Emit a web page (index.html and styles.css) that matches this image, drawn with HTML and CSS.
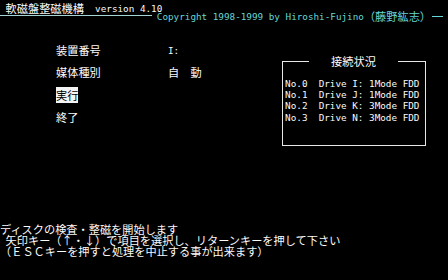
FILE: index.html
```html
<!DOCTYPE html>
<html lang="ja">
<head>
	<meta charset="UTF-8">
	<title>軟磁盤整磁機構</title>
	<link rel="stylesheet" href="styles.css">
</head>
<body>
	<div class="screen">
		<div class="title"><span class="ja">軟磁盤整磁機構</span><span class="en">  version 4.10</span></div>
		<div class="copy">
			<div class="rule"></div>
			<span class="en">Copyright 1998-1999 by Hiroshi-Fujino</span><span class="ja">（藤野紘志）</span>
			<div class="rule end"></div>
		</div>

		<div class="main">
			<ul class="menu">
				<li><span class="ja label">装置番号</span><span class="en">I:</span></li>
				<li><span class="ja label">媒体種別</span><span class="ja">自　動</span></li>
				<li><span class="ja label"><span class="sel">実行</span></span></li>
				<li><span class="ja label">終了</span></li>
			</ul>

			<div class="status">
				<div class="status-title ja">接続状況</div>
				<pre class="en drives">No.0  Drive I: 1Mode FDD
No.1  Drive J: 1Mode FDD
No.2  Drive K: 3Mode FDD
No.3  Drive N: 3Mode FDD</pre>
			</div>
		</div>

		<div class="msg">
			<p><span class="ja">ディスクの検査・整磁を開始します</span></p>
			<p><span class="en"> </span><span class="ja">矢印キー（↑・↓）で項目を選択し、リターンキーを押して下さい</span></p>
			<p><span class="ja">（ＥＳＣキーを押すと処理を中止する事が出来ます）</span></p>
		</div>
	</div>
</body>
</html>
```

FILE: styles.css
```css
* {
	margin: 0;
	padding: 0;
}

body {
	background: #000;
}

.screen {
	width: 448px;
	height: 280px;
	background: #000;
	color: #fafafa;
	display: flex;
	flex-direction: column;
	line-height: 11.2px;
	overflow: hidden;
}

.en {
	font-family: "DejaVu Sans Mono", monospace;
	font-size: 9.3px;
	white-space: pre;
	line-height: 11.2px;
}

.ja {
	font-family: "Noto Sans CJK JP", sans-serif;
	font-size: 11.2px;
	white-space: pre;
	line-height: 11.2px;
}

.title {
	height: 11.2px;
	display: flex;
	padding-left: 5.6px;
	padding-top: 2.5px;
}

.copy {
	height: 11.2px;
	display: flex;
	align-items: flex-start;
	color: #66d6d6;
	margin-top: -2.5px;
}

.rule {
	width: 152px;
	height: 1px;
	margin-top: 3.5px;
	margin-right: 4.8px;
	background: #a4d4d4;
	flex: none;
}

.rule.end {
	width: 11px;
	margin-left: 0.5px;
	margin-top: 4.5px;
	background: #66d6d6;
}

.main {
	display: flex;
	margin-top: 22.4px;
}

.menu {
	list-style: none;
	margin-left: 56px;
	width: 224px;
}

.menu li {
	height: 11.2px;
	margin-bottom: 11.2px;
	display: flex;
}

.label {
	width: 112px;
}

.sel {
	background: #f4f4f4;
	color: #000;
}

.status {
	width: 144px;
	height: 85px;
	margin-top: 16.4px;
	margin-left: 1.5px;
	border: 1px solid #e8e8e8;
	box-sizing: border-box;
}

.status-title {
	width: fit-content;
	margin: -6.6px auto 0;
	padding: 0 22px;
	background: #000;
}

.drives {
	margin-top: 11.2px;
	padding-left: 2.6px;
	display: block;
}

.msg {
	margin-top: auto;
	margin-bottom: 22.4px;
}

.msg p {
	height: 11.2px;
	display: flex;
}
```
